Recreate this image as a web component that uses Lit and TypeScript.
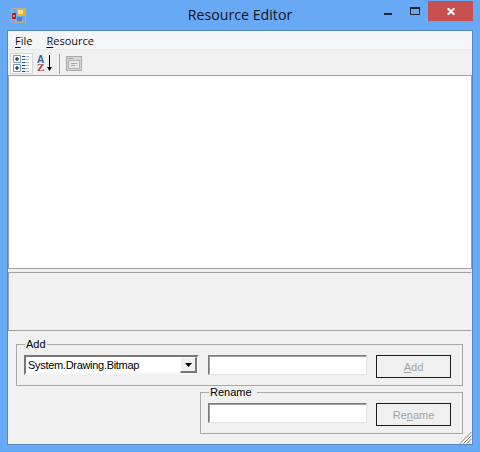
import { LitElement, html, css } from 'lit';
import { customElement } from 'lit/decorators.js';

@customElement('app-root')
export class AppRoot extends LitElement {
  static styles = css`
    :host {
      display: flex;
      flex-direction: column;
      width: 480px;
      height: 452px;
      box-sizing: border-box;
      background: #67a9f5;
      font-family: 'Liberation Sans', Arial, sans-serif;
      font-size: 11px;
      color: #000;
      overflow: hidden;
    }
    .titlebar {
      flex: none;
      height: 30px;
      display: flex;
      position: relative;
    }
    .app-icon {
      position: absolute;
      left: 11px;
      top: 8px;
    }
    .title {
      flex: 1;
      text-align: center;
      font-family: 'Open Sans', sans-serif;
      font-size: 14.2px;
      line-height: 30px;
      color: #10151c;
    }
    .caption {
      position: absolute;
      right: 7px;
      top: 1px;
      display: flex;
    }
    .cap {
      width: 27px;
      height: 20px;
      display: flex;
      justify-content: center;
    }
    .cap.min {
      padding-top: 12px;
      box-sizing: border-box;
    }
    .cap.max {
      padding-top: 6px;
      box-sizing: border-box;
    }
    .cap.close {
      width: 45px;
      padding-top: 7px;
      box-sizing: border-box;
      background: #c75050;
    }
    .client {
      flex: 1;
      margin: 0 7px 7px 7px;
      border: 1px solid #5488c4;
      background: #f0f0f0;
      display: flex;
      flex-direction: column;
      position: relative;
      min-height: 0;
    }
    .menu {
      flex: none;
      height: 18px;
      padding-left: 7px;
      display: flex;
      gap: 14px;
      align-items: center;
      background: #f5f6f7;
      border-bottom: 1px solid #e8e9ea;
      font-family: 'Open Sans', sans-serif;
      color: #111;
    }
    .menu u {
      text-underline-offset: 2px;
    }
    .toolbar {
      flex: none;
      height: 26px;
      padding: 3px 0 0 2px;
      display: flex;
      align-items: flex-start;
      background: #f0f0f0;
      box-sizing: border-box;
      border-bottom: 1px solid #a0a0a0;
    }
    .tool {
      width: 23px;
      height: 21px;
      box-sizing: border-box;
      display: flex;
      align-items: center;
      justify-content: center;
    }
    .tool.on {
      background: #f9f9f9;
      border: 1px solid #d8d8d8;
    }
    .sep {
      width: 1px;
      height: 20px;
      background: #a8a8a8;
      margin: 1px 2px 0 3px;
    }
    .az-a {
      font: bold 10px 'Liberation Sans', sans-serif;
      fill: #2f5da8;
    }
    .az-z {
      font: bold 11px 'Liberation Serif', serif;
      fill: #a0404a;
    }
    .grid {
      flex: none;
      height: 192px;
      background: #fff;
      border-left: 1px solid #a0a0a0;
      border-right: 1px solid #a0a0a0;
      border-bottom: 1px solid #a0a0a0;
    }
    .help {
      flex: none;
      height: 57px;
      margin-top: 3px;
      background: #f0f0f0;
      border: 1px solid #a0a0a0;
      border-right-color: #f0f0f0;
    }
    .groups {
      flex: 1;
      display: flex;
      flex-direction: column;
      align-items: flex-end;
      padding: 7px 9px 0 8px;
    }
    fieldset {
      margin: 0;
      box-sizing: border-box;
      height: 48px;
      min-width: 0;
      border: 1px solid #a8a8a8;
      padding: 4px 0 0 7px;
    }
    legend {
      padding: 0 1px;
      margin-left: 1px;
      line-height: 13px;
      height: 13px;
    }
    .add {
      width: 447px;
    }
    .rename {
      width: 263px;
    }
    .rename legend {
      padding-right: 5px;
    }
    .row {
      display: flex;
      align-items: flex-start;
      gap: 9px;
    }
    .combo {
      width: 175px;
      height: 20px;
      box-sizing: border-box;
      background: #fff;
      border: 2px solid;
      border-color: #777 #f6f6f6 #f6f6f6 #777;
      display: flex;
      justify-content: space-between;
      padding-left: 2px;
      line-height: 16px;
      letter-spacing: -0.3px;
      white-space: nowrap;
    }
    .drop {
      width: 17px;
      height: 16px;
      background: #f0f0f0;
      border: solid;
      border-width: 1px 2px 2px 1px;
      border-color: #fafafa #777 #777 #fafafa;
      box-sizing: border-box;
      display: flex;
      align-items: center;
      justify-content: center;
    }
    .field {
      width: 159px;
      height: 20px;
      box-sizing: border-box;
      background: #fff;
      border: 1px solid;
      border-color: #7a7a7a #e4e4e4 #e4e4e4 #7a7a7a;
      box-shadow: inset 1px 1px 0 #a0a0a0;
    }
    .btn {
      width: 75px;
      height: 23px;
      box-sizing: border-box;
      border: 1px solid #1a1a1a;
      background: #f0f0f0;
      color: #a3a3a3;
      display: flex;
      align-items: center;
      justify-content: center;
    }
    .grip {
      position: absolute;
      right: 0;
      bottom: 0;
    }
  `;

  render() {
    return html`
      <div class="titlebar">
        <svg class="app-icon" width="15" height="15" viewBox="0 0 15 15">
          <path d="M.5.5h14v14H.5zM.5 4.500h2M.5 11.500h2M4.500 11.500v3M11.500 11.500v3" fill="none" stroke="#b5ad98"/>
          <rect x="6" y="1" width="8" height="7" fill="#e9b422"/>
          <rect x="7" y="2" width="5" height="4" fill="#f9e07c"/>
          <rect x="1" y="5" width="4" height="6" fill="#b41c14"/>
          <rect x="2" y="7" width="2" height="2" fill="#f08070"/>
          <rect x="6" y="9" width="5" height="4" fill="#4f7fd0"/>
        </svg>
        <div class="title">Resource Editor</div>
        <div class="caption">
          <div class="cap min">
            <svg width="8" height="2" viewBox="0 0 8 2"><rect width="8" height="2" fill="#22262c"/></svg>
          </div>
          <div class="cap max">
            <svg width="10" height="8" viewBox="0 0 10 8">
              <path d="M.5.5h9v7h-9z" fill="none" stroke="#22262c"/><rect width="10" height="2" fill="#22262c"/>
            </svg>
          </div>
          <div class="cap close">
            <svg width="8" height="7" viewBox="0 0 8 7">
              <path d="M.7.3 7.300 6.700M7.300.3.7 6.700" stroke="#fff" stroke-width="2" fill="none"/>
            </svg>
          </div>
        </div>
      </div>
      <div class="client">
        <div class="menu">
          <span><u>F</u>ile</span>
          <span><u>R</u>esource</span>
        </div>
        <div class="toolbar">
          <div class="tool on">
            <svg width="17" height="17" viewBox="0 0 17 17">
              <path d="M.5.5h7v7h-7zM.5 9.500h7v7h-7z" fill="#fff" stroke="#6f9cc9"/>
              <path d="M2 4h4M4 2v4M2 13h4M4 11v4" stroke="#000"/>
              <path d="M9 1.500h3M9 4.500h3M9 7.500h3M9 10.500h3M9 13.500h3M9 16.500h3" stroke="#2c4f80"/>
              <path d="M12 1.500h4M12 4.500h4M12 7.500h4M12 10.500h4M12 13.500h4M12 16.500h4" stroke="#a9bacd"/>
            </svg>
          </div>
          <div class="tool">
            <svg width="17" height="17" viewBox="0 0 17 17">
              <text class="az-a" x="1" y="8">A</text>
              <text class="az-z" x="1" y="16">Z</text>
              <path d="M13.500 0v13" stroke="#000"/>
              <path d="M11 12h5l-2.500 4z" fill="#000"/>
            </svg>
          </div>
          <div class="sep"></div>
          <div class="tool">
            <svg width="16" height="15" viewBox="0 0 16 15">
              <rect x=".5" y=".5" width="15" height="14" fill="#d4d4d4" stroke="#ababab"/>
              <rect x="2.500" y="4.500" width="11" height="8" fill="#e6e6e6" stroke="#b4b4b4"/>
              <path d="M2 2.500h5M5 7.500h6M5 9.500h4" stroke="#a8a8a8"/>
            </svg>
          </div>
        </div>
        <div class="grid"></div>
        <div class="help"></div>
        <div class="groups">
          <fieldset class="add">
            <legend>Add</legend>
            <div class="row">
              <div class="combo">
                <span>System.Drawing.Bitmap</span>
                <span class="drop">
                  <svg width="7" height="4" viewBox="0 0 7 4"><path d="M0 0h7L3.500 4z" fill="#000"/></svg>
                </span>
              </div>
              <div class="field"></div>
              <div class="btn"><span><u>A</u>dd</span></div>
            </div>
          </fieldset>
          <fieldset class="rename">
            <legend>Rename</legend>
            <div class="row">
              <div class="field"></div>
              <div class="btn"><span>Re<u>n</u>ame</span></div>
            </div>
          </fieldset>
        </div>
        <svg class="grip" width="13" height="13" viewBox="0 0 13 13">
          <path d="M12.500 1 1 12.500M12.500 4.500 4.500 12.500M12.500 8 8 12.500" stroke="#808080" fill="none"/>
          <path d="M12.500 2.500 2.500 12.500M12.500 6 6 12.500M12.500 9.500 9.500 12.500" stroke="#fff" fill="none"/>
        </svg>
      </div>
    `;
  }
}
